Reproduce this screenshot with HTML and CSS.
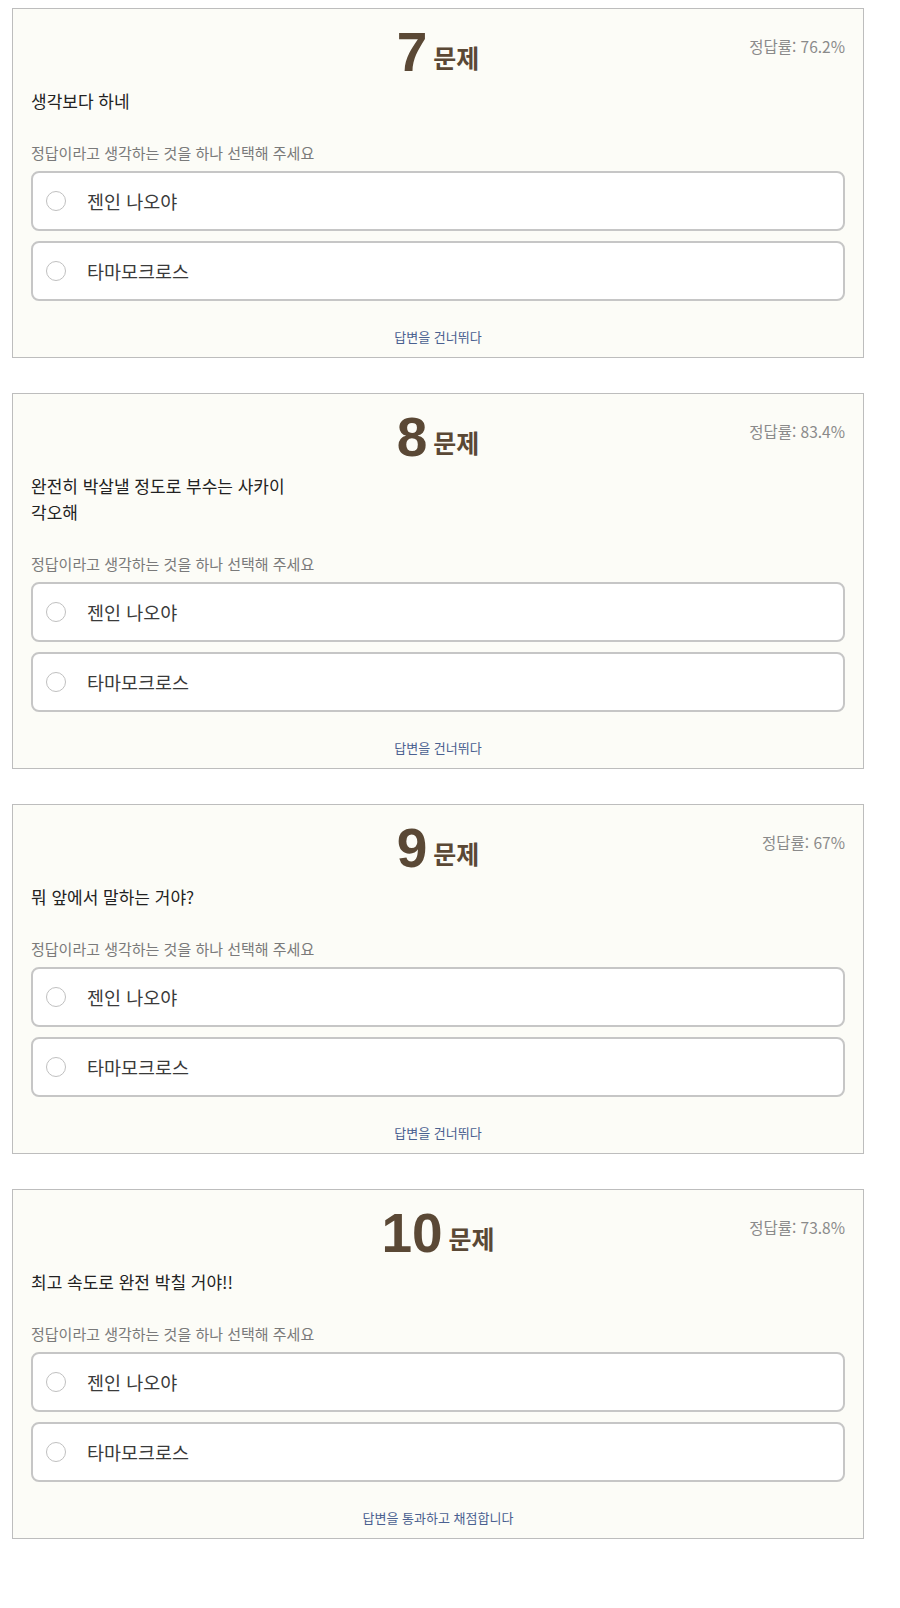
FILE: index.html
```html
<!DOCTYPE html>
<html lang="ko">
<head>
<meta charset="utf-8">
<title>퀴즈</title>
<link rel="stylesheet" href="styles.css">
</head>
<body>
<main class="quiz">
  <section class="card">
    <header class="card-head">
      <h2 class="q-title"><span class="q-num">7</span><span class="q-word">문제</span></h2>
      <span class="q-rate">정답률: 76.2%</span>
    </header>
    <p class="q-text">생각보다 하네</p>
    <p class="q-hint">정답이라고 생각하는 것을 하나 선택해 주세요</p>
    <div class="options">
      <label class="option"><span class="radio"></span><span class="opt-text">젠인 나오야</span></label>
      <label class="option"><span class="radio"></span><span class="opt-text">타마모크로스</span></label>
    </div>
    <a class="skip">답변을 건너뛰다</a>
  </section>

  <section class="card">
    <header class="card-head">
      <h2 class="q-title"><span class="q-num">8</span><span class="q-word">문제</span></h2>
      <span class="q-rate">정답률: 83.4%</span>
    </header>
    <p class="q-text">완전히 박살낼 정도로 부수는 사카이 각오해</p>
    <p class="q-hint">정답이라고 생각하는 것을 하나 선택해 주세요</p>
    <div class="options">
      <label class="option"><span class="radio"></span><span class="opt-text">젠인 나오야</span></label>
      <label class="option"><span class="radio"></span><span class="opt-text">타마모크로스</span></label>
    </div>
    <a class="skip">답변을 건너뛰다</a>
  </section>

  <section class="card">
    <header class="card-head">
      <h2 class="q-title"><span class="q-num">9</span><span class="q-word">문제</span></h2>
      <span class="q-rate">정답률: 67%</span>
    </header>
    <p class="q-text">뭐 앞에서 말하는 거야?</p>
    <p class="q-hint">정답이라고 생각하는 것을 하나 선택해 주세요</p>
    <div class="options">
      <label class="option"><span class="radio"></span><span class="opt-text">젠인 나오야</span></label>
      <label class="option"><span class="radio"></span><span class="opt-text">타마모크로스</span></label>
    </div>
    <a class="skip">답변을 건너뛰다</a>
  </section>

  <section class="card">
    <header class="card-head">
      <h2 class="q-title"><span class="q-num">10</span><span class="q-word">문제</span></h2>
      <span class="q-rate">정답률: 73.8%</span>
    </header>
    <p class="q-text">최고 속도로 완전 박칠 거야!!</p>
    <p class="q-hint">정답이라고 생각하는 것을 하나 선택해 주세요</p>
    <div class="options">
      <label class="option"><span class="radio"></span><span class="opt-text">젠인 나오야</span></label>
      <label class="option"><span class="radio"></span><span class="opt-text">타마모크로스</span></label>
    </div>
    <a class="skip">답변을 통과하고 채점합니다</a>
  </section>
</main>
</body>
</html>
```

FILE: styles.css
```css
* { box-sizing: border-box; }

body {
  margin: 0;
  background: #ffffff;
  font-family: "Noto Sans CJK KR", "Noto Sans", sans-serif;
  color: #222;
}

.quiz {
  display: flex;
  flex-direction: column;
  gap: 35px;
  padding: 8px 36px 0 12px;
}

.card {
  display: flex;
  flex-direction: column;
  background: #fcfcf7;
  border: 1px solid #bdbdbd;
  padding: 20px 18px 10px 18px;
}

.card-head {
  display: grid;
  grid-template-columns: 1fr auto 1fr;
  align-items: start;
  margin-bottom: 19px;
}

.q-title {
  grid-column: 2;
  margin: 0;
  display: flex;
  align-items: baseline;
  gap: 6px;
  height: 40px;
  line-height: 40px;
  color: #5a4835;
}

.q-num {
  font-family: "Liberation Sans", Arial, sans-serif;
  font-weight: 700;
  font-size: 55px;
  position: relative;
  top: 3px;
}

.q-word {
  font-size: 25px;
  font-weight: 700;
}

.q-rate {
  grid-column: 3;
  justify-self: end;
  margin-top: 7px;
  font-size: 15.5px;
  line-height: 20px;
  color: #8a8a8a;
}

.q-text {
  margin: 0;
  max-width: 270px;
  font-size: 17px;
  line-height: 26px;
  color: #222;
}

.q-hint {
  margin: 29px 0 8px;
  font-size: 15px;
  line-height: 20px;
  color: #7a7a7a;
}

.options {
  display: flex;
  flex-direction: column;
  gap: 10px;
}

.option {
  display: flex;
  align-items: center;
  gap: 21px;
  height: 60px;
  padding: 0 13px;
  border: 2px solid #c6c6c6;
  border-radius: 8px;
  background: #fff;
}

.radio {
  width: 20px;
  height: 20px;
  border-radius: 50%;
  border: 1px solid #c0c0c0;
  background: #fff;
  flex: none;
}

.opt-text {
  font-size: 18.5px;
  color: #3a3a3a;
}

.skip {
  align-self: center;
  margin-top: 26px;
  font-size: 13px;
  line-height: 20px;
  color: #4a6090;
  cursor: pointer;
}
```
